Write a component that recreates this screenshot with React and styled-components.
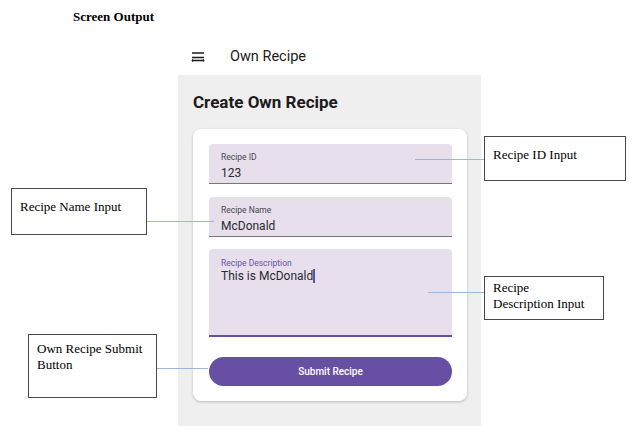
import React from 'react';
import styled, { createGlobalStyle } from 'styled-components';

const GlobalStyle = createGlobalStyle`
    body {
        margin: 0;
        background: #ffffff;
    }
`

const Page = styled.div`
    position: relative;
    width: 633px;
    height: 426px;
    overflow: hidden;
    font-family: "Liberation Serif", "Times New Roman", serif;
    color: #000;
`

const Caption = styled.div`
    padding: 9px 0 0 73px;
    font-size: 13px;
    font-weight: bold;
    line-height: 16px;
`

const Phone = styled.div`
    margin: 13px 0 0 178px;
    width: 303px;
    display: flex;
    flex-direction: column;
    font-family: Roboto, "Noto Sans", sans-serif;
`

const AppBar = styled.div`
    height: 37px;
    display: flex;
    align-items: center;
    gap: 25px;
    padding-left: 13px;
    box-sizing: border-box;
`

const AppTitle = styled.div`
    font-size: 14.5px;
    color: #1d1b20;
`

const Body = styled.div`
    background: #efefef;
    height: 351px;
    padding: 17px 14px 0 15px;
    box-sizing: border-box;
`

const Heading = styled.h1`
    margin: 0;
    font-size: 17px;
    line-height: 21px;
    font-weight: 700;
    color: #1d1b20;
`

const Card = styled.div`
    margin-top: 16px;
    background: #fff;
    border-radius: 8px;
    box-shadow: 0 1px 3px rgba(0, 0, 0, 0.22);
    padding: 15px 15px 15px 16px;
    display: flex;
    flex-direction: column;
    gap: 12.5px;
`

const Field = styled.div`
    height: ${(props) => props.tall ? '88px' : '40px'};
    flex-shrink: 0;
    background: #e7e0ec;
    border-radius: 4px 4px 0 0;
    border-bottom: ${(props) => props.focused ? '2px solid #6750a4' : '1px solid #79747e'};
    box-sizing: border-box;
    padding: ${(props) => props.tall ? '9px 12px 0' : '8px 12px 0'};
`

const Label = styled.div`
    font-size: 8.5px;
    line-height: 11px;
    color: ${(props) => props.focused ? '#6750a4' : '#49454f'};
`

const Value = styled.div`
    margin-top: ${(props) => props.tight ? '0' : '3px'};
    font-size: 12px;
    line-height: 14px;
    color: #2b2930;
    display: flex;
    align-items: center;
`

const Caret = styled.span`
    display: inline-block;
    width: 1.5px;
    height: 14px;
    background: #6750a4;
`

const SubmitButton = styled.button`
    margin-top: 7.5px;
    height: 29px;
    flex-shrink: 0;
    border: none;
    border-radius: 15px;
    background: #6750a4;
    color: #fff;
    font-family: Roboto, "Noto Sans", sans-serif;
    font-size: 10px;
    font-weight: 500;
`

const Callout = styled.div`
    position: absolute;
    left: ${(props) => props.x}px;
    top: ${(props) => props.y}px;
    width: ${(props) => props.w}px;
    height: ${(props) => props.h}px;
    border: 1px solid #4a4a4a;
    box-sizing: border-box;
    background: #fff;
    padding: ${(props) => props.pad || '10px 8px'};
    font-size: 13px;
    line-height: 16px;
`

const Connector = styled.div`
    position: absolute;
    left: ${(props) => props.x}px;
    top: ${(props) => props.y}px;
    width: ${(props) => props.w}px;
    height: 1px;
    background: #9db4dd;
`

const MenuIcon = () => (
    <svg width="14" height="12" viewBox="0 0 14 12">
        <path d="M1 2h12M1 6.5h12M1 9.5h12" stroke="#1d1b20" strokeWidth="1.6" fill="none" />
        <path d="M2 8l-1 1.5 1 1.5M12 8l1 1.5-1 1.5" stroke="#1d1b20" strokeWidth="0.8" fill="none" />
    </svg>
)

const App = () => {
  return (
    <Page>
        <GlobalStyle />
        <Caption>Screen Output</Caption>
        <Phone>
            <AppBar>
                <MenuIcon />
                <AppTitle>Own Recipe</AppTitle>
            </AppBar>
            <Body>
                <Heading>Create Own Recipe</Heading>
                <Card>
                    <Field>
                        <Label>Recipe ID</Label>
                        <Value>123</Value>
                    </Field>
                    <Field>
                        <Label>Recipe Name</Label>
                        <Value>McDonald</Value>
                    </Field>
                    <Field tall focused>
                        <Label focused>Recipe Description</Label>
                        <Value tight>This is McDonald<Caret /></Value>
                    </Field>
                    <SubmitButton>Submit Recipe</SubmitButton>
                </Card>
            </Body>
        </Phone>

        <Connector x={415} y={159} w={69} />
        <Callout x={484} y={136} w={142} h={45}>Recipe ID Input</Callout>

        <Connector x={147} y={221} w={67} />
        <Callout x={11} y={188} w={136} h={47}>Recipe Name Input</Callout>

        <Connector x={428} y={292} w={56} />
        <Callout x={484} y={276} w={120} h={44} pad="3px 8px">Recipe<br />Description Input</Callout>

        <Connector x={157} y={368} w={51} />
        <Callout x={28} y={334} w={129} h={64} pad="6px 8px">Own Recipe Submit<br />Button</Callout>
    </Page>
  )
}

export default App
